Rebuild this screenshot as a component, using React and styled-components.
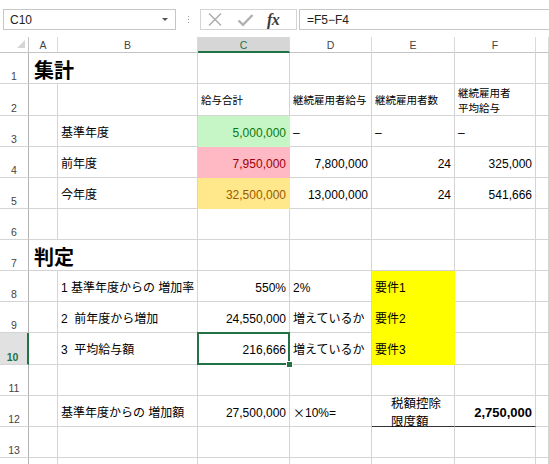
import React from 'react';
import styled, { createGlobalStyle } from 'styled-components';

const GlobalStyle = createGlobalStyle`
  html, body { margin: 0; padding: 0; background: #fff; }
  body {
    font-family: "Liberation Sans", "Noto Sans CJK JP", sans-serif;
    overflow: hidden;
  }
`;

const Page = styled.div`
  width: 549px;
  height: 464px;
  overflow: hidden;
  background: #fff;
`;

const TopBar = styled.div`
  height: 37px;
  box-sizing: border-box;
  padding-top: 9px;
  display: flex;
  align-items: flex-start;
`;

const NameBox = styled.div`
  margin-left: 3px;
  width: 173px;
  height: 21px;
  box-sizing: border-box;
  border: 1px solid #c6c6c6;
  display: flex;
  align-items: center;
  justify-content: space-between;
  padding: 0 7px 0 6px;
  font-size: 12px;
  color: #222;
`;

const Caret = styled.span`
  width: 0;
  height: 0;
  border-left: 3px solid transparent;
  border-right: 3px solid transparent;
  border-top: 3px solid #555;
`;

const Dots = styled.div`
  width: 24px;
  height: 21px;
  display: flex;
  flex-direction: column;
  align-items: center;
  justify-content: center;
  gap: 2px;
`;

const Dot = styled.span`
  width: 1px;
  height: 1px;
  background: #9a9a9a;
`;

const ButtonGroup = styled.div`
  width: 97px;
  height: 21px;
  box-sizing: border-box;
  border: 1px solid #d4d4d4;
  display: flex;
  align-items: center;
  padding-left: 6px;
  gap: 14px;
`;

const Fx = styled.span`
  font-family: "Liberation Serif", "DejaVu Serif", serif;
  font-style: italic;
  font-weight: 700;
  font-size: 16px;
  color: #3a3a3a;
  letter-spacing: -0.5px;
  margin-left: -1px;
  line-height: 1;
`;

const FormulaBox = styled.div`
  margin-left: 2px;
  flex: 1;
  height: 21px;
  box-sizing: border-box;
  border: 1px solid #c6c6c6;
  border-right: none;
  display: flex;
  align-items: center;
  padding-left: 7px;
  font-size: 12px;
  color: #222;
`;

const rowHeights = [31, 32, 31, 31, 31, 31, 31, 31, 31, 32, 31, 31, 31, 31];

const Sheet = styled.div`
  display: grid;
  grid-template-columns: 29px 29px 140px 92px 82px 83px 81px 1fr;
  grid-template-rows: 16px ${rowHeights.map((h) => h + 'px').join(' ')};
`;

const Corner = styled.div`
  box-sizing: border-box;
  border-right: 1px solid #c4c4c4;
  border-bottom: 1px solid #c4c4c4;
  display: flex;
  align-items: flex-end;
  justify-content: flex-end;
  padding: 0 3px 4px 0;
`;

const ColHeader = styled.div`
  box-sizing: border-box;
  border-right: 1px solid #dadada;
  border-bottom: ${(p) => (p.$active ? '2px solid #217346' : '1px solid #c4c4c4')};
  background: ${(p) => (p.$active ? '#d6d6d6' : '#fff')};
  color: ${(p) => (p.$active ? '#217346' : '#444')};
  font-size: 10.5px;
  display: flex;
  align-items: center;
  justify-content: center;
  padding-top: ${(p) => (p.$active ? '1px' : '0')};
`;

const RowHeader = styled.div`
  box-sizing: border-box;
  border-right: ${(p) => (p.$active ? '2px solid #217346' : '1px solid #b4b4b4')};
  border-bottom: 1px solid #d4d4d4;
  background: ${(p) => (p.$active ? '#e1e1e1' : '#fff')};
  color: ${(p) => (p.$active ? '#217346' : '#444')};
  font-weight: ${(p) => (p.$active ? 700 : 400)};
  font-size: 10.5px;
  line-height: 12px;
  display: flex;
  align-items: flex-end;
  justify-content: center;
  padding: 0 ${(p) => (p.$active ? '2px' : '0')} 1px 0;
`;

const tones = {
  good: { bg: '#c6f5c6', fg: '#0b7a0b' },
  bad: { bg: '#ffb9c4', fg: '#a1000a' },
  neutral: { bg: '#ffe88c', fg: '#9a5a00' },
  yellow: { bg: '#ffff00', fg: '#000' },
};

const Cell = styled.div`
  position: relative;
  box-sizing: border-box;
  grid-column: span ${(p) => p.$span || 1};
  border-right: 1px solid ${(p) => (p.$tone ? tones[p.$tone].bg : '#d4d4d4')};
  border-bottom: 1px solid
    ${(p) => (p.$underline ? '#333' : p.$tone ? tones[p.$tone].bg : '#d4d4d4')};
  background: ${(p) => (p.$tone ? tones[p.$tone].bg : '#fff')};
  color: ${(p) => (p.$tone ? tones[p.$tone].fg : '#000')};
  font-weight: ${(p) => (p.$bold ? 700 : 400)};
  font-size: ${(p) => (p.$bold ? 13 : 12)}px;
  line-height: 16px;
  display: flex;
  align-items: center;
  justify-content: ${(p) => (p.$align === 'right' ? 'flex-end' : 'flex-start')};
  padding: 3px 3px 0 ${(p) => p.$indent || 3}px;
  white-space: pre;
  z-index: ${(p) => (p.$selected ? 2 : 'auto')};

  ${(p) =>
    p.$selected &&
    `
    &::after {
      content: '';
      position: absolute;
      left: -1px;
      top: -1px;
      right: -1px;
      bottom: -1px;
      border: 2px solid #217346;
      pointer-events: none;
    }
  `}
`;

const Title = styled(Cell)`
  font-family: "Noto Sans CJK JP", sans-serif;
  font-size: 20px;
  font-weight: 700;
  line-height: 24px;
  align-items: flex-end;
  padding: 0 0 1px 5px;
`;

const HeadCell = styled(Cell)`
  font-size: 10.5px;
  line-height: 14.5px;
  padding-top: 2px;
`;

const NoteCell = styled(Cell)`
  font-size: 12.5px;
  line-height: 18px;
  padding-top: 4px;
`;

const Handle = styled.span`
  position: absolute;
  right: -4px;
  bottom: -4px;
  width: 5px;
  height: 5px;
  background: #217346;
  border: 1px solid #fff;
  z-index: 3;
`;

const Times = styled.span`
  font-family: "Noto Sans CJK JP", sans-serif;
`;

const CrossIcon = () => (
  <svg width="16" height="15" viewBox="0 0 16 15">
    <path d="M2 1.5L14 13.5M14 1.5L2 13.5" stroke="#ababab" strokeWidth="1.4" fill="none" />
  </svg>
);

const CheckIcon = () => (
  <svg width="17" height="14" viewBox="0 0 17 14">
    <path d="M1.5 7.5L6 11.8L15.5 2" stroke="#b0b0b0" strokeWidth="2.4" fill="none" />
  </svg>
);

const CornerMark = () => (
  <svg width="8" height="8" viewBox="0 0 8 8">
    <polygon points="8,0 8,8 0,8" fill="#d6d6d6" />
  </svg>
);

const E = {};
const rows = [
  [{ kind: 'title', t: '集計', span: 2 }, E, E, E, E, E],
  [E, E, { kind: 'head', t: '給与合計' }, { kind: 'head', t: '継続雇用者給与' }, { kind: 'head', t: '継続雇用者数' }, { kind: 'head', t: '継続雇用者\n平均給与' }, E],
  [E, { t: '基準年度' }, { t: '5,000,000', align: 'right', tone: 'good' }, { t: '–' }, { t: '–' }, { t: '–' }, E],
  [E, { t: '前年度' }, { t: '7,950,000', align: 'right', tone: 'bad' }, { t: '7,800,000', align: 'right' }, { t: '24', align: 'right' }, { t: '325,000', align: 'right' }, E],
  [E, { t: '今年度' }, { t: '32,500,000', align: 'right', tone: 'neutral' }, { t: '13,000,000', align: 'right' }, { t: '24', align: 'right' }, { t: '541,666', align: 'right' }, E],
  [E, E, E, E, E, E, E],
  [{ kind: 'title', t: '判定', span: 2 }, E, E, E, E, E],
  [E, { t: '1 基準年度からの 増加率' }, { t: '550%', align: 'right' }, { t: '2%' }, { t: '要件1', tone: 'yellow' }, E, E],
  [E, { t: '2  前年度から増加' }, { t: '24,550,000', align: 'right' }, { t: '増えているか' }, { t: '要件2', tone: 'yellow' }, E, E],
  [E, { t: '3  平均給与額' }, { t: '216,666', align: 'right', selected: true }, { t: '増えているか' }, { t: '要件3', tone: 'yellow' }, E, E],
  [E, E, E, E, E, E, E],
  [E, { t: '基準年度からの 増加額' }, { t: '27,500,000', align: 'right' }, { kind: 'times', t: '10%=' }, { kind: 'note', t: '税額控除\n限度額', underline: true, indent: 19 }, { t: '2,750,000', align: 'right', bold: true, underline: true }, E],
  [E, E, E, E, E, E, E],
  [E, E, E, E, E, E, E],
];

const visibleRowLabels = 13;
const cols = ['A', 'B', 'C', 'D', 'E', 'F', 'G'];

function renderCell(c, key) {
  const common = {
    key,
    $span: c.span,
    $align: c.align,
    $tone: c.tone,
    $bold: c.bold,
    $underline: c.underline,
    $selected: c.selected,
    $indent: c.indent,
  };
  if (c.kind === 'title') return <Title {...common}>{c.t}</Title>;
  if (c.kind === 'head') return <HeadCell {...common}>{c.t}</HeadCell>;
  if (c.kind === 'note') return <NoteCell {...common}>{c.t}</NoteCell>;
  if (c.kind === 'times')
    return (
      <Cell {...common}>
        <Times>×</Times>
        {c.t}
      </Cell>
    );
  return (
    <Cell {...common}>
      {c.t}
      {c.selected && <Handle />}
    </Cell>
  );
}

export default function App() {
  return (
    <Page>
      <GlobalStyle />
      <TopBar>
        <NameBox>
          C10
          <Caret />
        </NameBox>
        <Dots>
          <Dot />
          <Dot />
          <Dot />
        </Dots>
        <ButtonGroup>
          <CrossIcon />
          <CheckIcon />
          <Fx>fx</Fx>
        </ButtonGroup>
        <FormulaBox>=F5−F4</FormulaBox>
      </TopBar>
      <Sheet>
        <Corner>
          <CornerMark />
        </Corner>
        {cols.map((c) => (
          <ColHeader key={c} $active={c === 'C'}>
            {c === 'G' ? '' : c}
          </ColHeader>
        ))}
        {rows.map((r, i) => (
          <React.Fragment key={i}>
            <RowHeader $active={i === 9}>{i < visibleRowLabels ? i + 1 : ''}</RowHeader>
            {r.map((c, j) => renderCell(c, j))}
          </React.Fragment>
        ))}
      </Sheet>
    </Page>
  );
}
